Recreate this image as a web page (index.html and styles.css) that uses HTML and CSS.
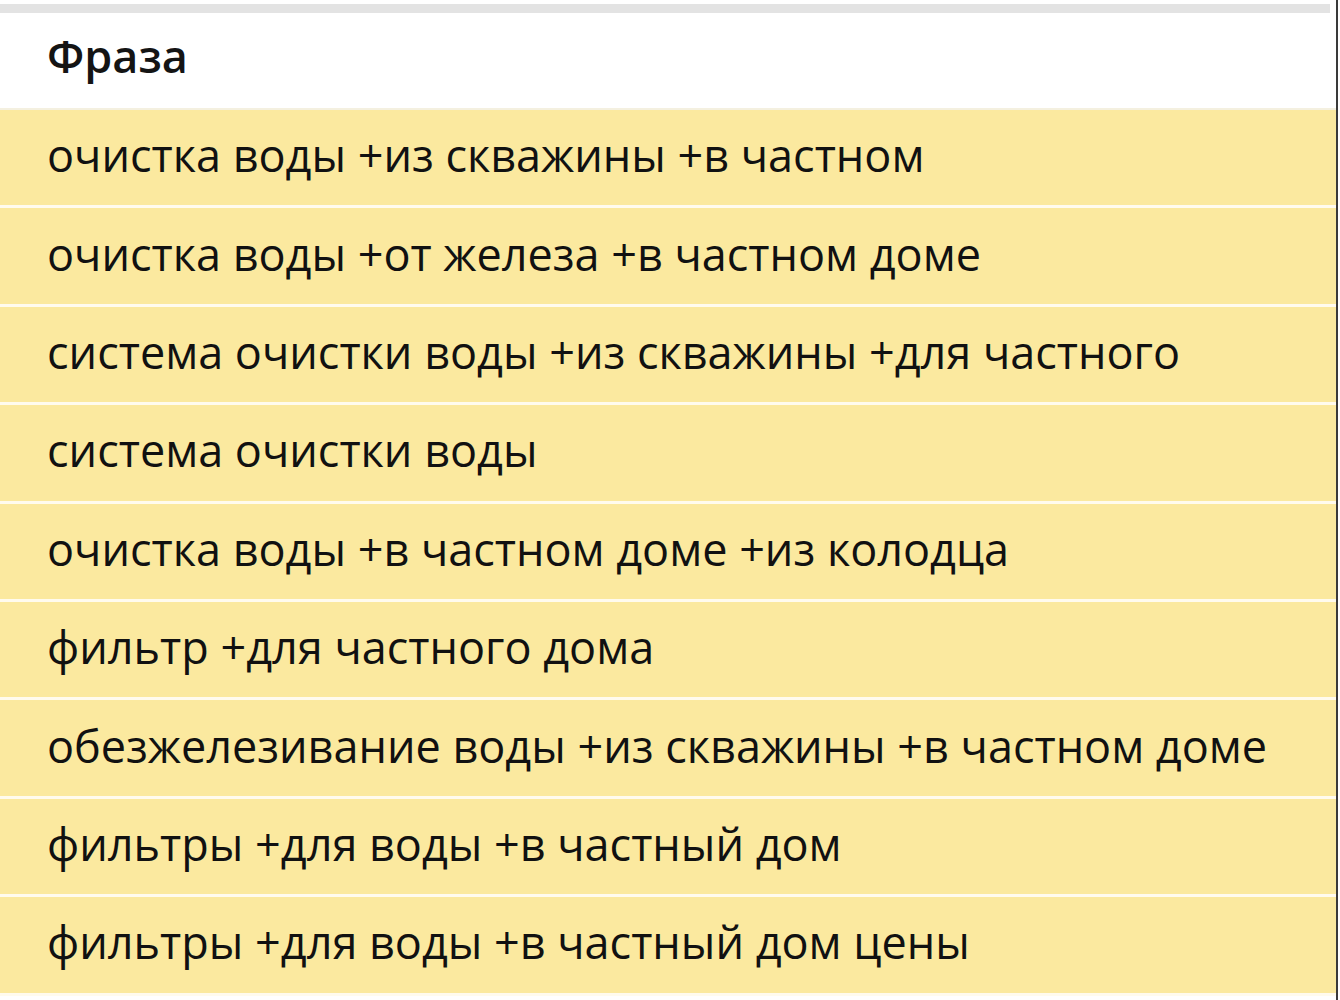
FILE: index.html
```html
<!DOCTYPE html>
<html lang="ru">
<head>
<meta charset="utf-8">
<link rel="stylesheet" href="styles.css">
</head>
<body>
<div class="frame">
  <div class="topband"></div>
  <div class="table">
    <div class="head">Фраза</div>
    <div class="row">очистка воды +из скважины +в частном</div>
    <div class="row">очистка воды +от железа +в частном доме</div>
    <div class="row">система очистки воды +из скважины +для частного</div>
    <div class="row">система очистки воды</div>
    <div class="row">очистка воды +в частном доме +из колодца</div>
    <div class="row">фильтр +для частного дома</div>
    <div class="row">обезжелезивание воды +из скважины +в частном доме</div>
    <div class="row">фильтры +для воды +в частный дом</div>
    <div class="row">фильтры +для воды +в частный дом цены</div>
  </div>
</div>
</body>
</html>
```
FILE: styles.css
```css
html, body {
  margin: 0;
  padding: 0;
  background: #ffffff;
}
body {
  font-family: "Open Sans", "DejaVu Sans", sans-serif;
  color: #111111;
}
.frame {
  width: 1336px;
  height: 1000px;
  border-right: 2px solid #3a3a3a;
  overflow: hidden;
  padding-top: 4px;
  box-sizing: content-box;
}
.topband {
  height: 9px;
  background: #e3e3e3;
  margin-right: 6px;
}
.table {
  display: flex;
  flex-direction: column;
}
.head {
  height: 85px;
  padding-bottom: 10px;
  display: flex;
  align-items: center;
  padding-left: 47px;
  font-size: 45px;
  font-weight: 600;
  color: #141414;
  background: #ffffff;
  border-bottom: 2px solid #f4f0e0;
}
.row {
  height: 89.4px;
  padding-bottom: 6px;
  display: flex;
  align-items: center;
  padding-left: 47px;
  font-size: 45px;
  background: #fbe99f;
  border-bottom: 3px solid #fffbee;
  box-sizing: content-box;
}
```
